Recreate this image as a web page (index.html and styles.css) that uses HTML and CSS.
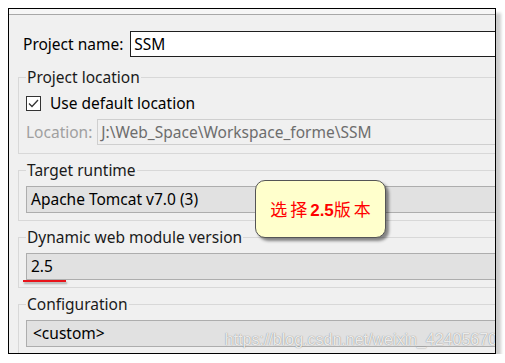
FILE: index.html
```html
<!DOCTYPE html>
<html lang="zh-CN">
<head>
    <meta charset="UTF-8">
    <title>New Dynamic Web Project</title>
    <link rel="stylesheet" href="styles.css">
</head>
<body>
    <div class="frame">
        <div class="top-strip"></div>
        <div class="content">
            <div class="name-row">
                <span class="label">Project name:</span>
                <div class="text-input">SSM</div>
            </div>

            <fieldset class="group location">
                <legend>Project location</legend>
                <div class="check-row">
                    <span class="checkbox">
                        <svg width="11" height="9" viewBox="0 0 11 9"><path d="M1 4.5 L4 7.5 L10 1" fill="none" stroke="#333" stroke-width="1.3"/></svg>
                    </span>
                    <span>Use default location</span>
                </div>
                <div class="location-row">
                    <span class="label muted">Location:</span>
                    <div class="text-input disabled">J:\Web_Space\Workspace_forme\SSM</div>
                </div>
            </fieldset>

            <fieldset class="group">
                <legend>Target runtime</legend>
                <div class="combo">Apache Tomcat v7.0 (3)</div>
            </fieldset>

            <fieldset class="group">
                <legend>Dynamic web module version</legend>
                <div class="combo">2.5</div>
            </fieldset>

            <fieldset class="group">
                <legend>Configuration</legend>
                <div class="combo custom">&lt;custom&gt;</div>
            </fieldset>
        </div>

        <div class="underline"></div>
        <div class="callout">选择<b>2.5</b>版本</div>
        <div class="watermark">https://blog.csdn.net/weixin_42405670</div>
    </div>
</body>
</html>
```

FILE: styles.css
```css
* {
    margin: 0;
    padding: 0;
    box-sizing: border-box;
}

body {
    background: #fff;
    font-family: 'Noto Sans', 'Open Sans', sans-serif;
    font-size: 15.5px;
    color: #000;
}

.frame {
    position: relative;
    margin: 8px 0 0 8px;
    width: 488px;
    height: 346px;
    border: 1px solid #000;
    background: #f0f0f0;
    overflow: hidden;
    box-shadow: 5px 5px 3px rgba(0, 0, 0, 0.2);
}

.top-strip {
    height: 6px;
    background: #f6f6f6;
    border-bottom: 1px solid #a8a8a8;
}

.content {
    width: 560px;
    padding: 16px 0 0 9px;
    display: flex;
    flex-direction: column;
}

.name-row {
    display: flex;
    align-items: center;
    height: 26px;
    padding-left: 5px;
    gap: 7px;
}

.label {
    line-height: 18px;
    white-space: nowrap;
}

.muted {
    color: #a0a0a0;
}

.text-input {
    flex: 1;
    height: 26px;
    line-height: 24px;
    padding-left: 3px;
    background: #fff;
    border: 1px solid #1e1e1e;
    white-space: nowrap;
}

.text-input.disabled {
    background: #f0f0f0;
    border-color: #cfcfcf;
    color: #6d6d6d;
}

.group {
    margin-top: 7px;
    border: 1px solid #d8d8d8;
    padding: 7px;
}

.group.location {
    margin-top: 11px;
    padding-bottom: 8px;
}

.group legend {
    line-height: 18px;
    padding: 0 1px;
    color: #1a1a1a;
}

.check-row {
    display: flex;
    align-items: center;
    height: 18px;
    margin-top: 1px;
    gap: 9px;
}

.checkbox {
    width: 15px;
    height: 15px;
    border: 1px solid #333;
    background: #fff;
    display: flex;
    align-items: center;
    justify-content: center;
}

.location-row {
    display: flex;
    align-items: center;
    margin-top: 7px;
    gap: 5px;
}

.combo {
    height: 27px;
    line-height: 25px;
    padding-left: 4px;
    background: #e1e1e1;
    border: 1px solid #adadad;
    white-space: nowrap;
}

.combo.custom {
    padding-left: 6px;
}

.underline {
    position: absolute;
    left: 14px;
    top: 271px;
    width: 43px;
    height: 2px;
    background: #e8141b;
    box-shadow: 1px 2px 2px rgba(0, 0, 0, 0.3);
}

.callout {
    position: absolute;
    left: 246px;
    top: 171px;
    width: 131px;
    height: 58px;
    border: 1px solid #555;
    border-radius: 10px;
    background: #ffffcc;
    box-shadow: 3px 3px 3px rgba(0, 0, 0, 0.45);
    color: #ff0000;
    font-family: 'Noto Sans CJK SC', sans-serif;
    font-size: 17px;
    letter-spacing: 3px;
    line-height: 56px;
    text-align: center;
    padding-left: 3px;
}

.callout b {
    font-family: 'Liberation Sans', sans-serif;
    letter-spacing: 0;
}

.watermark {
    position: absolute;
    right: -2px;
    bottom: 4px;
    font-family: 'Liberation Sans', sans-serif;
    font-size: 16px;
    color: rgba(255, 255, 255, 0.85);
    text-shadow: 0 0 1px rgba(0, 0, 0, 0.5);
    white-space: nowrap;
}
```
